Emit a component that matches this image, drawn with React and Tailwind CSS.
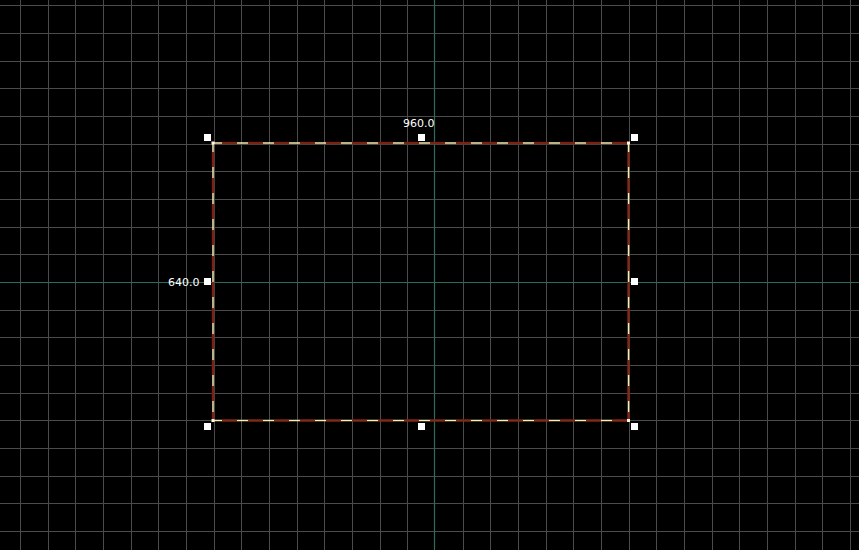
import React from 'react';

const W = 859;
const H = 550;
const STEP = 27.67;
const AXIS_X = 434;
const AXIS_Y = 282;

// grid lines laid out from the origin both ways
const colsX = [];
for (let k = -16; k <= 16; k++) {
  const x = Math.round(435 + k * STEP);
  if (x >= 0 && x <= W && k !== 0) colsX.push(x);
}
const rowsY = [];
for (let k = -11; k <= 11; k++) {
  const y = Math.round(AXIS_Y + k * STEP);
  if (y >= 0 && y <= H && k !== 0) rowsY.push(y);
}

const RECT = { x1: 213, y1: 143, x2: 628.5, y2: 420.5 };

const HANDLES = [
  { id: 'tl', x: 204, y: 134 },
  { id: 'tm', x: 418, y: 134 },
  { id: 'tr', x: 631, y: 134 },
  { id: 'ml', x: 204, y: 278 },
  { id: 'mr', x: 631, y: 278 },
  { id: 'bl', x: 204, y: 423 },
  { id: 'bm', x: 418, y: 423 },
  { id: 'br', x: 631, y: 423 },
];

const Edge = ({ x1, y1, x2, y2 }) => (
  <g>
    <line x1={x1} y1={y1} x2={x2} y2={y2} stroke="#fbecb4" strokeWidth="1.5" />
    <line x1={x1} y1={y1} x2={x2} y2={y2} stroke="#6e0c02" strokeWidth="2.6" strokeDasharray="15 11" strokeDashoffset="-9" opacity="0.86" />
  </g>
);

const App = () => {
  return (
    <div className="relative w-[859px] h-[550px] overflow-hidden bg-black select-none" style={{ fontFamily: "'DejaVu Sans', 'Liberation Sans', sans-serif" }}>
      {/* grid + selection frame */}
      <svg className="absolute inset-0" width={W} height={H} viewBox={`0 0 ${W} ${H}`}>
        {colsX.map((x) => (
          <line key={`c${x}`} x1={x + 0.5} y1="0" x2={x + 0.5} y2={H} stroke="#4b4b4b" strokeWidth="1" />
        ))}
        {rowsY.map((y) => (
          <line key={`r${y}`} x1="0" y1={y + 0.5} x2={W} y2={y + 0.5} stroke="#4b4b4b" strokeWidth="1" />
        ))}
        <line x1={AXIS_X + 0.5} y1="0" x2={AXIS_X + 0.5} y2={H} stroke="#2f6a5e" strokeWidth="1.2" />
        <line x1="0" y1={AXIS_Y + 0.5} x2={W} y2={AXIS_Y + 0.5} stroke="#2f6a5e" strokeWidth="1.2" />

        <Edge x1={RECT.x1} y1={RECT.y1} x2={RECT.x2} y2={RECT.y1} />
        <Edge x1={RECT.x2} y1={RECT.y1} x2={RECT.x2} y2={RECT.y2} />
        <Edge x1={RECT.x1} y1={RECT.y2} x2={RECT.x2} y2={RECT.y2} />
        <Edge x1={RECT.x1} y1={RECT.y1} x2={RECT.x1} y2={RECT.y2} />

        {[[RECT.x1, RECT.y1], [RECT.x2, RECT.y1], [RECT.x1, RECT.y2], [RECT.x2, RECT.y2]].map(([x, y]) => (
          <rect key={`d${x}-${y}`} x={x - 1.5} y={y - 1.5} width="3" height="3" fill="#fff8dc" />
        ))}
      </svg>

      {/* resize handles */}
      {HANDLES.map((h) => (
        <div key={h.id} className="absolute w-[7px] h-[7px] bg-white" style={{ left: h.x, top: h.y }} />
      ))}

      {/* size labels */}
      <div className="absolute left-[403px] top-[117px] text-[11px] leading-[14px] text-white">960.0</div>
      <div className="absolute left-[168px] top-[276px] text-[11px] leading-[14px] text-white">640.0</div>
    </div>
  );
};

export default App;
